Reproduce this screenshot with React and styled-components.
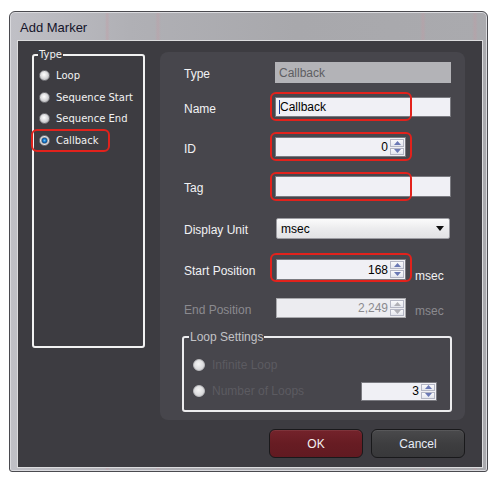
import React from "react";
import styled, { createGlobalStyle } from "styled-components";

const Global = createGlobalStyle`
  html, body { margin: 0; padding: 0; background: #ffffff; }
  body { font-family: "Liberation Sans", Arial, sans-serif; }
  * { box-sizing: border-box; }
`;

const Page = styled.div`
  width: 499px;
  height: 483px;
  padding: 11px 0 0 9px;
  background: #ffffff;
`;

const Window = styled.div`
  width: 479px;
  height: 461px;
  display: flex;
  flex-direction: column;
  border: 1px solid #4a4a4f;
  border-radius: 6px 6px 3px 3px;
  padding: 0 4px 3px 7px;
  background:
    linear-gradient(90deg, transparent 95px, rgba(200,150,160,0.35) 97px, transparent 100px),
    linear-gradient(90deg, transparent 145px, rgba(200,150,160,0.3) 148px, transparent 151px),
    linear-gradient(90deg, transparent 410px, rgba(200,150,160,0.3) 413px, transparent 416px),
    linear-gradient(90deg, transparent 462px, rgba(200,150,160,0.3) 465px, transparent 468px),
    linear-gradient(90deg, #c0c0c6 0%, #b0b0b5 25%, #a8a8ac 60%, #aaaaae 100%);
  box-shadow: inset 0 0 0 1px #dadade;
`;

const TitleBar = styled.div`
  height: 28px;
  display: flex;
  align-items: center;
  padding: 2px 0 0 3px;
  font-size: 13px;
  color: #14142a;
`;

const Content = styled.div`
  flex: 1;
  background: #3d3c41;
  border: 1px solid #dcdcde;
  padding: 8px 17px 0 14px;
  display: flex;
  flex-direction: column;
`;

const MainRow = styled.div`
  display: flex;
  align-items: flex-start;
  gap: 15px;
`;

const TypeGroup = styled.fieldset`
  margin: 0;
  width: 113px;
  height: 299px;
  min-width: 0;
  border: 2px solid #f2f2f2;
  border-radius: 3px;
  padding: 4px 0 0 5px;
`;

const TypeLegend = styled.legend`
  font-family: "DejaVu Sans", Verdana, sans-serif;
  font-size: 10px;
  line-height: 12px;
  color: #f2f2f2;
  padding: 0 1px;
  margin-left: -1px;
`;

const TypeOption = styled.div`
  position: relative;
  height: 21.6px;
  display: flex;
  align-items: center;
  gap: 6px;
  font-family: "DejaVu Sans", Verdana, sans-serif;
  font-size: 10px;
  color: #f2f2f2;
  white-space: nowrap;
`;

const Radio = styled.span`
  flex: none;
  width: ${(p) => p.$size}px;
  height: ${(p) => p.$size}px;
  border-radius: 50%;
  border: 1px solid ${(p) => (p.$disabled ? "#bdbdc0" : "#77777c")};
  background: ${(p) =>
    p.$checked
      ? "radial-gradient(circle at 50% 50%, #6cc4f4 0, #1c7ccc 22%, #0c4d8e 40%, #9a9a9e 48%, #e8e8ea 62%, #a4a4a8 100%)"
      : p.$disabled
      ? "radial-gradient(circle at 45% 40%, #f4f4f4 0, #dedee0 55%, #c8c8cc 100%)"
      : "radial-gradient(circle at 45% 40%, #ffffff 0, #dcdcde 45%, #a6a6aa 100%)"};
`;

const Highlight = styled.span`
  position: absolute;
  left: ${(p) => p.$l}px;
  top: ${(p) => p.$t}px;
  width: ${(p) => p.$w}px;
  height: ${(p) => p.$h}px;
  border: 2px solid #e2221c;
  border-radius: 6px;
  pointer-events: none;
`;

const Panel = styled.div`
  width: 305px;
  height: 368px;
  margin-top: 3px;
  background: #47464c;
  border-radius: 8px;
  padding: 10px 0 0 24px;
  display: flex;
  flex-direction: column;
`;

const Row = styled.div`
  display: flex;
  align-items: center;
  height: ${(p) => p.$h}px;
  margin-top: ${(p) => p.$mt}px;
`;

const Label = styled.div`
  width: 91px;
  flex: none;
  padding-top: 3px;
  font-size: 12px;
  color: ${(p) => (p.$disabled ? "#8b8a8f" : "#f2f2f4")};
  white-space: nowrap;
`;

const Anchor = styled.div`
  position: relative;
  display: flex;
`;

const Box = styled.div`
  width: ${(p) => p.$w}px;
  height: ${(p) => p.$h}px;
  margin-left: ${(p) => p.$ml || 0}px;
  display: flex;
  align-items: center;
  padding: 0 3px;
  font-size: 12px;
  color: ${(p) => (p.$disabled ? "#5e5e62" : "#000")};
  background: ${(p) => (p.$disabled ? "#b3b3b7" : "#f0f0f5")};
  border: 1px solid ${(p) => (p.$disabled ? "#b3b3b7" : "#7a7a80")};
`;

const Caret = styled.span`
  display: inline-block;
  width: 1px;
  height: 14px;
  background: #1a3a9a;
  margin-right: 0;
`;

const Select = styled.div`
  width: 174px;
  height: 21px;
  margin-left: 1px;
  display: flex;
  align-items: center;
  justify-content: space-between;
  padding: 0 5px 0 4px;
  font-size: 12px;
  color: #000;
  border: 1px solid #9c9ca2;
  border-radius: 2px;
  background: linear-gradient(#fbfbfb, #ececee 50%, #e2e2e4);
`;

const Spin = styled.div`
  width: ${(p) => p.$w}px;
  height: ${(p) => p.$h}px;
  margin-left: ${(p) => p.$ml || 0}px;
  display: flex;
  align-items: stretch;
  border: 1px solid ${(p) => (p.$disabled ? "#a8a8ac" : "#7a7a80")};
  background: ${(p) => (p.$disabled ? "#ececf0" : "#f0f0f5")};
  font-size: 12px;
  color: ${(p) => (p.$disabled ? "#8a8a8e" : "#000")};
`;

const SpinValue = styled.div`
  flex: 1;
  display: flex;
  align-items: center;
  justify-content: flex-end;
  padding-right: 2px;
`;

const SpinButtons = styled.div`
  width: 14px;
  margin: 1px 1px 1px 0;
  display: flex;
  flex-direction: column;
  gap: 1px;
`;

const SpinHalf = styled.div`
  flex: 1;
  display: flex;
  align-items: center;
  justify-content: center;
  border: 1px solid #b4b6c4;
  background: linear-gradient(#fafafc, #e4e6ee);
`;

const Suffix = styled.div`
  margin-left: 9px;
  padding-top: ${(p) => p.$drop * 2}px;
  font-size: 12px;
  color: ${(p) => (p.$disabled ? "#8b8a8f" : "#f2f2f4")};
`;

const LoopGroup = styled.fieldset`
  margin: 12px 0 0 -2px;
  width: 270px;
  height: 82px;
  min-width: 0;
  border: 2px solid #ececee;
  border-radius: 3px;
  padding: 8px 13px 0 9px;
`;

const LoopLegend = styled.legend`
  font-size: 12px;
  line-height: 14px;
  color: #c2c2c6;
  padding: 0 1px;
  margin-left: -4px;
`;

const LoopRow = styled.div`
  height: 26px;
  display: flex;
  align-items: center;
  gap: 7px;
  font-size: 12px;
  color: #5c5b61;
`;

const Push = styled.div`
  margin-left: auto;
`;

const ButtonRow = styled.div`
  display: flex;
  justify-content: flex-end;
  gap: 8px;
  margin-top: 9px;
`;

const Button = styled.button`
  width: 94px;
  height: 29px;
  border-radius: 6px;
  border: 1px solid #19191b;
  font-family: "Liberation Sans", Arial, sans-serif;
  font-size: 12px;
  color: ${(p) => (p.$primary ? "#f4f0f0" : "#e6ecf6")};
  background: ${(p) =>
    p.$primary
      ? "linear-gradient(#74232b, #671c23 50%, #611a21)"
      : "linear-gradient(#4a4a4c, #3e3e40 50%, #38383a)"};
  box-shadow: inset 0 1px 0 rgba(255, 255, 255, 0.08);
  padding: 0;
`;

const Tri = ({ up, color }) => (
  <svg width="7" height="4" viewBox="0 0 7 4">
    <polygon points={up ? "0,4 7,4 3.5,0" : "0,0 7,0 3.5,4"} fill={color} />
  </svg>
);

const SpinBox = ({ value, w, h, ml, disabled }) => {
  const c = disabled ? "#b0b0b6" : "#6a78b4";
  return (
    <Spin $w={w} $h={h} $ml={ml} $disabled={disabled}>
      <SpinValue>{value}</SpinValue>
      <SpinButtons>
        <SpinHalf>
          <Tri up color={c} />
        </SpinHalf>
        <SpinHalf>
          <Tri color={c} />
        </SpinHalf>
      </SpinButtons>
    </Spin>
  );
};

const types = ["Loop", "Sequence Start", "Sequence End", "Callback"];

export default function App() {
  return (
    <>
      <Global />
      <Page>
        <Window>
          <TitleBar>Add Marker</TitleBar>
          <Content>
            <MainRow>
              <TypeGroup>
                <TypeLegend>Type</TypeLegend>
                {types.map((t) => (
                  <TypeOption key={t}>
                    <Radio $size={11} $checked={t === "Callback"} />
                    {t}
                    {t === "Callback" && <Highlight $l={-8} $t={-1} $w={79} $h={23} />}
                  </TypeOption>
                ))}
              </TypeGroup>
              <Panel>
                <Row $h={21} $mt={0}>
                  <Label>Type</Label>
                  <Box $w={176} $h={21} $disabled>Callback</Box>
                </Row>
                <Row $h={20} $mt={14}>
                  <Label>Name</Label>
                  <Anchor>
                    <Box $w={176} $h={20}>
                      <Caret />
                      Callback
                    </Box>
                    <Highlight $l={-5} $t={-5} $w={142} $h={29} />
                  </Anchor>
                </Row>
                <Row $h={20} $mt={20}>
                  <Label>ID</Label>
                  <Anchor>
                    <SpinBox value="0" w={131} h={20} />
                    <Highlight $l={-5} $t={-5} $w={142} $h={29} />
                  </Anchor>
                </Row>
                <Row $h={21} $mt={19}>
                  <Label>Tag</Label>
                  <Anchor>
                    <Box $w={176} $h={21} />
                    <Highlight $l={-5} $t={-4} $w={142} $h={29} />
                  </Anchor>
                </Row>
                <Row $h={21} $mt={21}>
                  <Label>Display Unit</Label>
                  <Select>
                    msec
                    <svg width="8" height="5" viewBox="0 0 8 5">
                      <polygon points="0,0 8,0 4,5" fill="#111" />
                    </svg>
                  </Select>
                </Row>
                <Row $h={21} $mt={20}>
                  <Label>Start Position</Label>
                  <Anchor>
                    <SpinBox value="168" w={130} h={21} ml={1} />
                    <Highlight $l={-5} $t={-6} $w={142} $h={29} />
                  </Anchor>
                  <Suffix $drop={6.5}>msec</Suffix>
                </Row>
                <Row $h={20} $mt={18}>
                  <Label $disabled>End Position</Label>
                  <SpinBox value="2,249" w={130} h={20} ml={1} disabled />
                  <Suffix $drop={3} $disabled>msec</Suffix>
                </Row>
                <LoopGroup>
                  <LoopLegend>Loop Settings</LoopLegend>
                  <LoopRow>
                    <Radio $size={12} $disabled />
                    Infinite Loop
                  </LoopRow>
                  <LoopRow>
                    <Radio $size={12} $disabled />
                    Number of Loops
                    <Push>
                      <SpinBox value="3" w={76} h={19} />
                    </Push>
                  </LoopRow>
                </LoopGroup>
              </Panel>
            </MainRow>
            <ButtonRow>
              <Button $primary>OK</Button>
              <Button>Cancel</Button>
            </ButtonRow>
          </Content>
        </Window>
      </Page>
    </>
  );
}
